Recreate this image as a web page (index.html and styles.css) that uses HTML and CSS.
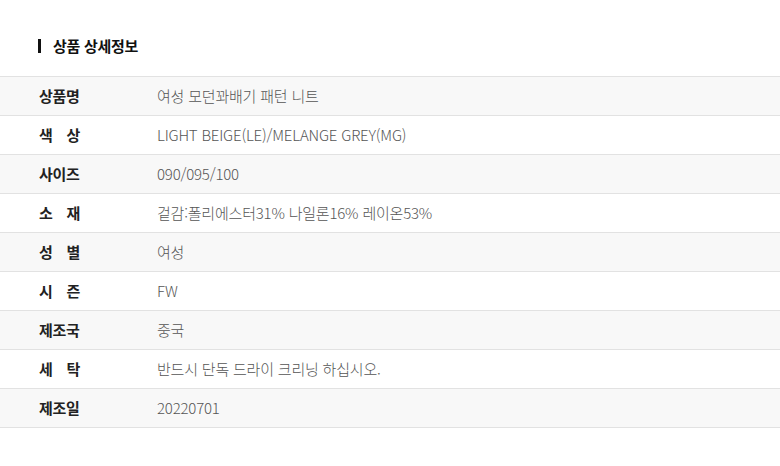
FILE: index.html
```html
<!DOCTYPE html>
<html lang="ko">
<head>
<meta charset="utf-8">
<link rel="stylesheet" href="styles.css">
</head>
<body>
<section class="detail">
  <h2 class="title">상품 상세정보</h2>
  <table class="info">
    <tr class="alt"><th><span class="lbl">상품명</span></th><td>여성 모던꽈배기 패턴 니트</td></tr>
    <tr><th><span class="lbl">색 상</span></th><td>LIGHT BEIGE(LE)/MELANGE GREY(MG)</td></tr>
    <tr class="alt"><th><span class="lbl">사이즈</span></th><td>090/095/100</td></tr>
    <tr><th><span class="lbl">소 재</span></th><td>겉감:폴리에스터31% 나일론16% 레이온53%</td></tr>
    <tr class="alt"><th><span class="lbl">성 별</span></th><td>여성</td></tr>
    <tr><th><span class="lbl">시 즌</span></th><td>FW</td></tr>
    <tr class="alt"><th><span class="lbl">제조국</span></th><td>중국</td></tr>
    <tr><th><span class="lbl">세 탁</span></th><td>반드시 단독 드라이 크리닝 하십시오.</td></tr>
    <tr class="alt"><th><span class="lbl">제조일</span></th><td>20220701</td></tr>
  </table>
</section>
</body>
</html>
```
FILE: styles.css
```css
html, body {
  margin: 0;
  padding: 0;
  background: #fff;
}
body {
  font-family: "Noto Sans CJK KR", "Noto Sans", sans-serif;
  width: 780px;
  height: 466px;
  overflow: hidden;
}
.title {
  margin: 39px 0 23px 38px;
  padding-left: 12px;
  border-left: 3px solid #111;
  font-size: 15px;
  line-height: 14px;
  height: 14px;
  font-weight: 700;
  color: #111;
  letter-spacing: -0.3px;
  display: flex;
  align-items: center;
}
.info {
  width: 100%;
  border-collapse: collapse;
  border-top: 1px solid #e2e2e2;
}
.info tr {
  height: 39px;
  border-bottom: 1px solid #e2e2e2;
}
.info tr.alt {
  background: #f8f8f8;
}
.info th {
  width: 118px;
  padding: 0 0 2px 39px;
  text-align: left;
  font-weight: 700;
  font-size: 15px;
  color: #222;
  vertical-align: middle;
}
.lbl {
  display: block;
  width: 41px;
  text-align: justify;
  text-align-last: justify;
  letter-spacing: -0.3px;
}
.info td {
  padding: 0 0 2px 0;
  font-size: 15px;
  font-weight: 300;
  color: #555;
  letter-spacing: -0.2px;
  vertical-align: middle;
}
```
